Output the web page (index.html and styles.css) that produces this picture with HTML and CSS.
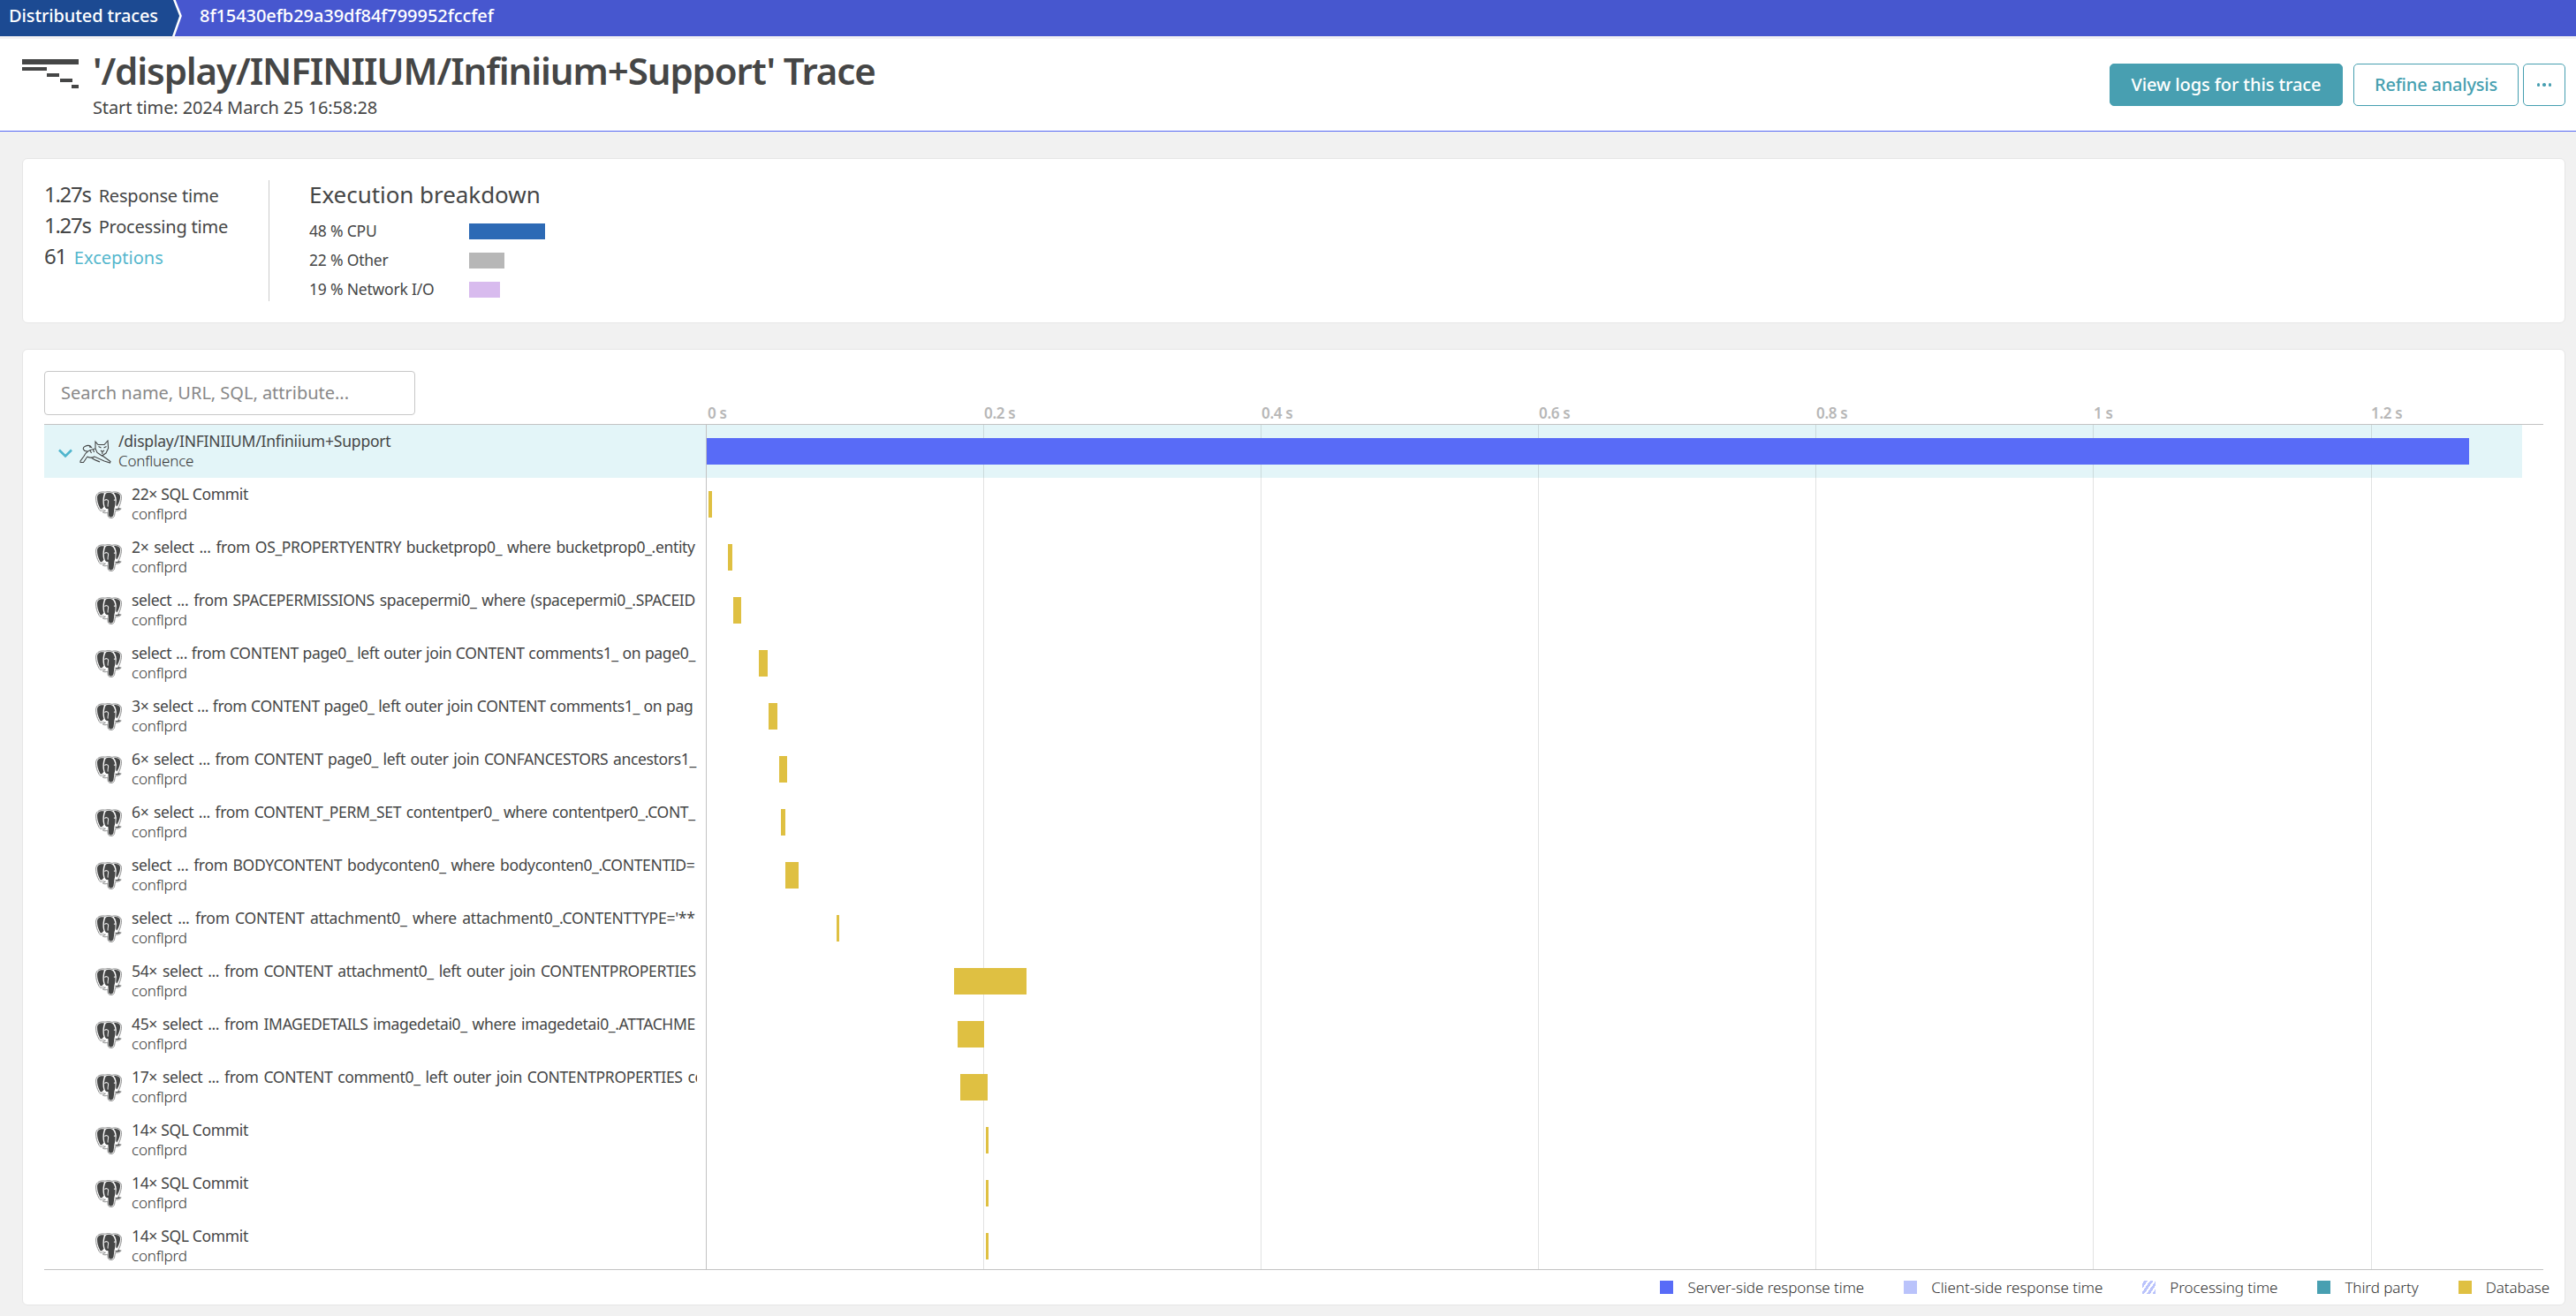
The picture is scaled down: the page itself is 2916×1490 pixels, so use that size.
FILE: index.html
```html
<!DOCTYPE html>
<html lang="en">
<head>
<meta charset="utf-8">
<title>Distributed trace</title>
<link rel="stylesheet" href="styles.css">
</head>
<body>
<svg class="sprite" width="0" height="0" aria-hidden="true">
  <symbol id="postgres" viewBox="0 0 30 31">
    <path d="M11 1.2C6 .2 1 2 .6 7c-.3 5 1.500 10 3.400 13.400 1.200 2.400 3.200 2.600 4.600 1 .8.700 1.600 1 2.800.8-1 1-2.400 1-3.200 1.600 1.400 1.400 4 1.200 5.600.2l.4 4c.4 3.600 7 3.200 7.400-.4l.8-5.400c2.600.4 5.600-.6 6.800-2.200-.8-.6-2.400 0-3.600-.4C29 14 30.600 6 28.400 3.400 26 .8 21.600.4 18.800 1.400 16 .4 13.400.4 11 1.200z" fill="#fff" stroke="#8b8c8c" stroke-width="1"/>
    <path d="M10 2.400C5.500 1.600 2.200 3 2 7.200c-.1 4.200 1.400 8.800 3.100 12 1 1.800 2.200 1.400 3.200.1l1.200-1.500C8.200 14.600 8 7.200 10 2.400z" fill="#454646"/>
    <path d="M12 2.600c-2.400 3-2.800 11.400-1.100 15.600.7 1.500 1.900 2.100 3.500 1.700l.5 7.300c.5 3.200 5.200 3 5.600-.1l1-7.900C23.400 14.600 23 5.600 19 2.800c-2.200-1.200-5-1.200-7-.2z" fill="#454646"/>
    <path d="M20.800 2.200c2.400-.6 5.400-.1 6.700 1.900 1.500 2.900-.3 9.700-3.300 13.500-.9-1-1-2.400-.8-3.600.8-4.800.2-9-2.600-11.800z" fill="#454646"/>
    <path d="M10.400 10.600c1.600-1.600 4-1 4.200.8.1 2.200-1 4-.4 6.200M21 10.500c1-.8 2-.6 2.600-.2" fill="none" stroke="#e4e4e4" stroke-width="1.100"/>
    <path d="M22.600 20.200c1.500.7 3.700.5 5-.4" fill="none" stroke="#454646" stroke-width="1.200"/>
  </symbol>
</svg>

<nav class="crumbs">
  <a class="crumb-root">Distributed traces</a>
  <svg class="crumb-arrow" viewBox="0 0 14 41"><path class="crumb-fill" d="M0 0H2L10 18L1 41H0z"/><path class="crumb-line" d="M2 -1L9.500 18L1 42"/></svg>
  <span class="crumb-id">8f15430efb29a39df84f799952fccfef</span>
</nav>

<header class="page-head">
  <svg class="trace-icon" viewBox="0 0 64 33"><path d="M0 0h64v6H0zM0 9h28v4H0zM28 16h14v4H28zM43 22h14v4H43zM56 29h8v4h-8z"/></svg>
  <div class="head-text">
    <h1>'/display/INFINIIUM/Infiniium+Support' Trace</h1>
    <p>Start time: 2024 March 25 16:58:28</p>
  </div>
  <div class="actions">
    <button class="btn primary">View logs for this trace</button>
    <button class="btn">Refine analysis</button>
    <button class="btn more" aria-label="More"><i></i><i></i><i></i></button>
  </div>
</header>

<main>
  <section class="card summary">
    <div class="stats">
      <div class="stat"><b>1.27s</b><span>Response time</span></div>
      <div class="stat"><b>1.27s</b><span>Processing time</span></div>
      <div class="stat"><b>61</b><a>Exceptions</a></div>
    </div>
    <div class="breakdown">
      <h2>Execution breakdown</h2>
      <div class="share"><span>48 % CPU</span><i class="cpu" style="width:86px"></i></div>
      <div class="share"><span>22 % Other</span><i class="other" style="width:40px"></i></div>
      <div class="share"><span>19 % Network I/O</span><i class="net" style="width:35px"></i></div>
    </div>
  </section>

  <section class="card trace">
    <div class="trace-head">
      <div class="search">Search name, URL, SQL, attribute...</div>
      <div class="ticks"><span>0 s</span><span>0.2 s</span><span>0.4 s</span><span>0.6 s</span><span>0.8 s</span><span>1 s</span><span>1.2 s</span></div>
    </div>
    <div class="rows">
      <div class="grid"><i></i><i></i><i></i><i></i><i></i><i></i><i></i></div>
      <div class="row root">
        <div class="label">
          <svg class="chevron" viewBox="0 0 16 11"><path d="M1 1.500L8 8.500L15 1.500"/></svg>
          <svg class="tomcat" viewBox="0 0 36 27"><path d="M18 2l3 3.500h7L32 1l.6 8.500-2.600 5.500-4.600 3-5.400-3.500-2-4.500zM21.500 7.500l3 1.500M30.500 7.500l-3 1.500M24 12l1.800 1.500L28 12M25.800 13.500V16M18 10C12 11 7 14 5 18.500L1 24v1.500h3.500l4-6M9 13C4 13 3 9 6 7.500S12 6 13.500 8.500L11 8M8.500 19c3 1.500 6 1.500 8.500 0l11 5 6.500 2 .5-1.500-9-6.500M12 12l1.500 3M15.500 11l1 3M13 20c4 3 8 4 10 5"/></svg>
          <div class="names"><strong>/display/INFINIIUM/Infiniium+Support</strong><small>Confluence</small></div>
        </div>
        <i class="bar" style="margin-left:1px;width:1995px"></i>
      </div>
      <div class="row commit"><div class="label"><svg class="db"><use href="#postgres"/></svg><div class="names"><strong>22× SQL Commit</strong><small>conflprd</small></div></div><i class="bar" style="margin-left:3px;width:4px"></i></div>
      <div class="row"><div class="label"><svg class="db"><use href="#postgres"/></svg><div class="names"><strong>2× select ... from OS_PROPERTYENTRY bucketprop0_ where bucketprop0_.entity</strong><small>conflprd</small></div></div><i class="bar" style="margin-left:25px;width:5px"></i></div>
      <div class="row"><div class="label"><svg class="db"><use href="#postgres"/></svg><div class="names"><strong>select ... from SPACEPERMISSIONS spacepermi0_ where (spacepermi0_.SPACEID</strong><small>conflprd</small></div></div><i class="bar" style="margin-left:31px;width:9px"></i></div>
      <div class="row tight"><div class="label"><svg class="db"><use href="#postgres"/></svg><div class="names"><strong>select ... from CONTENT page0_ left outer join CONTENT comments1_ on page0_</strong><small>conflprd</small></div></div><i class="bar" style="margin-left:60px;width:10px"></i></div>
      <div class="row tight"><div class="label"><svg class="db"><use href="#postgres"/></svg><div class="names"><strong>3× select ... from CONTENT page0_ left outer join CONTENT comments1_ on pag</strong><small>conflprd</small></div></div><i class="bar" style="margin-left:71px;width:10px"></i></div>
      <div class="row"><div class="label"><svg class="db"><use href="#postgres"/></svg><div class="names"><strong class="near">6× select ... from CONTENT page0_ left outer join CONFANCESTORS ancestors1_</strong><small>conflprd</small></div></div><i class="bar" style="margin-left:83px;width:9px"></i></div>
      <div class="row"><div class="label"><svg class="db"><use href="#postgres"/></svg><div class="names"><strong class="near">6× select ... from CONTENT_PERM_SET contentper0_ where contentper0_.CONT_</strong><small>conflprd</small></div></div><i class="bar" style="margin-left:85px;width:5px"></i></div>
      <div class="row"><div class="label"><svg class="db"><use href="#postgres"/></svg><div class="names"><strong>select ... from BODYCONTENT bodyconten0_ where bodyconten0_.CONTENTID=</strong><small>conflprd</small></div></div><i class="bar" style="margin-left:90px;width:15px"></i></div>
      <div class="row loose"><div class="label"><svg class="db"><use href="#postgres"/></svg><div class="names"><strong>select ... from CONTENT attachment0_ where attachment0_.CONTENTTYPE='**</strong><small>conflprd</small></div></div><i class="bar" style="margin-left:148px;width:3px"></i></div>
      <div class="row"><div class="label"><svg class="db"><use href="#postgres"/></svg><div class="names"><strong>54× select ... from CONTENT attachment0_ left outer join CONTENTPROPERTIES</strong><small>conflprd</small></div></div><i class="bar" style="margin-left:281px;width:82px"></i></div>
      <div class="row"><div class="label"><svg class="db"><use href="#postgres"/></svg><div class="names"><strong>45× select ... from IMAGEDETAILS imagedetai0_ where imagedetai0_.ATTACHME</strong><small>conflprd</small></div></div><i class="bar" style="margin-left:285px;width:30px"></i></div>
      <div class="row"><div class="label"><svg class="db"><use href="#postgres"/></svg><div class="names"><strong>17× select ... from CONTENT comment0_ left outer join CONTENTPROPERTIES co</strong><small>conflprd</small></div></div><i class="bar" style="margin-left:288px;width:31px"></i></div>
      <div class="row commit"><div class="label"><svg class="db"><use href="#postgres"/></svg><div class="names"><strong>14× SQL Commit</strong><small>conflprd</small></div></div><i class="bar" style="margin-left:317px;width:3px"></i></div>
      <div class="row commit"><div class="label"><svg class="db"><use href="#postgres"/></svg><div class="names"><strong>14× SQL Commit</strong><small>conflprd</small></div></div><i class="bar" style="margin-left:317px;width:3px"></i></div>
      <div class="row commit"><div class="label"><svg class="db"><use href="#postgres"/></svg><div class="names"><strong>14× SQL Commit</strong><small>conflprd</small></div></div><i class="bar" style="margin-left:317px;width:3px"></i></div>
    </div>
    <div class="legend">
      <span><i class="server"></i>Server-side response time</span>
      <span><i class="client"></i>Client-side response time</span>
      <span><i class="processing"></i>Processing time</span>
      <span><i class="third"></i>Third party</span>
      <span><i class="database"></i>Database</span>
    </div>
  </section>
</main>
</body>
</html>
```
FILE: styles.css
```css
* { box-sizing: border-box; }
body {
  margin: 0;
  height: 1490px;
  overflow: hidden;
  background: #f1f1f1;
  color: #454646;
  font: 400 20px/1.2 "Noto Sans", "Open Sans", sans-serif;
}
h1, h2, p { margin: 0; }
.sprite { position: absolute; }

/* breadcrumbs */
.crumbs {
  display: flex;
  height: 41px;
  background: #4757cf;
  color: #fff;
  font-weight: 500;
  line-height: 35px;
}
.crumb-root {
  width: 195px;
  padding-left: 10px;
  background: #1c4a92;
  letter-spacing: -.12px;
  white-space: nowrap;
}
.crumb-arrow { width: 14px; height: 41px; }
.crumb-fill { fill: #1c4a92; }
.crumb-line { fill: none; stroke: #fff; stroke-width: 2.5; }
.crumb-id { margin-left: 17px; letter-spacing: -.06px; }

/* page header */
.page-head {
  display: flex;
  height: 108px;
  padding: 14px 12px 0 25px;
  background: #fff;
  border-top: 3px solid #f3f2f4;
  border-bottom: 1px solid #5669f5;
}
.trace-icon { width: 64px; height: 33px; margin-top: 9px; fill: #454646; }
.head-text { flex: 1; margin: -3px 0 0 16px; }
h1 {
  font-size: 42px;
  line-height: 50px;
  font-weight: 600;
  letter-spacing: -1.1px;
}
.head-text p { line-height: 33px; letter-spacing: -.11px; }
.actions { display: flex; padding-top: 14px; }
.btn {
  height: 48px;
  padding: 0;
  width: 187px;
  margin-left: 12px;
  border: 1px solid #469fb0;
  border-radius: 5px;
  background: #fff;
  color: #469fb0;
  font: 500 20px/44px "Noto Sans", sans-serif;
  letter-spacing: -.2px;
}
.btn.primary {
  width: 264px;
  background: #489fb1;
  color: #fff;
  letter-spacing: -.09px;
}
.btn.more {
  display: flex;
  justify-content: center;
  gap: 3px;
  width: 48px;
  margin-left: 5px;
  padding-top: 21px;
}
.more i { width: 3.5px; height: 3.5px; border-radius: 50%; background: #489fb1; }

/* cards */
main {
  display: flex;
  flex-direction: column;
  gap: 29px;
  padding: 30px 12px 0 25px;
}
.card {
  background: #fff;
  border: 1px solid #e6e6e6;
  border-radius: 6px;
}
.summary { display: flex; height: 187px; padding: 24px; }
.stats {
  width: 255px;
  height: 137px;
  border-right: 1px solid #ccc;
}
.stat {
  display: flex;
  align-items: baseline;
  height: 35px;
  line-height: 31px;
  letter-spacing: -.2px;
  white-space: nowrap;
}
.stat b {
  margin-right: 9px;
  font-size: 24px;
  font-weight: 400;
  letter-spacing: -1.3px;
}
.stat a { color: #55b7cd; letter-spacing: 0; }
.breakdown { margin-left: 45px; }
h2 {
  margin: -2px 0 7px;
  font-size: 26px;
  font-weight: 400;
  line-height: 36px;
  letter-spacing: -.05px;
}
.share {
  display: flex;
  align-items: center;
  height: 33px;
  font-size: 17.5px;
  letter-spacing: -.2px;
  line-height: 33px;
}
.share span { width: 181px; }
.share i { height: 18px; }
.cpu { background: #2d6ab5; }
.other { background: #b7b7b7; }
.net { background: #d8bbee; }

/* waterfall */
.trace { height: 1083px; padding: 24px 24px 0; }
.trace-head {
  display: flex;
  height: 61px;
  border-bottom: 1px solid #c3c3c3;
}
.search {
  flex: none;
  width: 420px;
  height: 50px;
  padding-left: 18px;
  border: 1px solid #c7c7c7;
  border-radius: 4px;
  color: #888;
  letter-spacing: -.02px;
  line-height: 47px;
}
.ticks {
  display: grid;
  flex: none;
  grid-template-columns: 313px repeat(6, 314px);
  align-items: end;
  margin-left: 331px;
  color: #b7b7b7;
  font-size: 17px;
  font-weight: 600;
  letter-spacing: -.3px;
  line-height: 24px;
}
.ticks span:last-child { width: 60px; }
.rows {
  position: relative;
  height: 957px;
  overflow: hidden;
  border-bottom: 1px solid #c3c3c3;
}
.grid {
  position: absolute;
  inset: 0 0 0 749px;
  display: grid;
  grid-template-columns: repeat(7, 314.1px);
}
.grid i { border-left: 1px solid rgba(120, 125, 125, .22); }
.grid i:first-child { border-left-color: #c3c3c3; }
.row { display: flex; align-items: center; width: 2805px; height: 60px; }
.root { background: #e3f5f8; }
.label {
  display: flex;
  flex: none;
  width: 749px;
  height: 60px;
  padding: 6px 10px 0 58px;
}
.root .label { padding-left: 16px; }
.chevron { width: 16px; height: 11px; margin-top: 21px; fill: none; stroke: #4fb5cd; stroke-width: 2.600; }
.tomcat { width: 36px; height: 27px; margin: 11px 8px 0; fill: none; stroke: #454646; stroke-width: 1.1; }
.db { flex: none; width: 30px; height: 31px; margin: 9px 11px 0 0; }
.names { flex: 1; min-width: 0; overflow: hidden; white-space: nowrap; }
.names strong {
  display: block;
  font-size: 17.5px;
  font-weight: 400;
  letter-spacing: -.34px;
  word-spacing: 1.7px;
  line-height: 24px;
}
.root strong { letter-spacing: -.2px; }
.names .near { word-spacing: 1.4px; }
.tight strong { word-spacing: .5px; }
.loose strong { letter-spacing: -.24px; word-spacing: 2px; }
.commit strong { word-spacing: 0; }
.names small {
  display: block;
  color: #333;
  font-size: 17px;
  font-weight: 300;
  letter-spacing: -.18px;
  line-height: 22px;
}
.bar { position: relative; height: 30px; background: #dfc042; }
.root .bar { background: #586bf7; }

/* legend */
.legend {
  display: flex;
  justify-content: flex-end;
  gap: 45px;
  margin-right: -7px;
  color: #333;
  font-size: 17px;
  font-weight: 300;
  letter-spacing: -.05px;
  line-height: 39px;
}
.legend span { display: flex; align-items: center; }
.legend i { width: 15px; height: 15px; margin-right: 16px; }
.server { background: #586bf7; }
.client { background: #bac3fb; }
.processing { background: repeating-linear-gradient(-55deg, #bac3fb 0 3px, #fff 3px 5.300px); }
.third { background: #489fb1; }
.database { background: #dfc042; }
```
